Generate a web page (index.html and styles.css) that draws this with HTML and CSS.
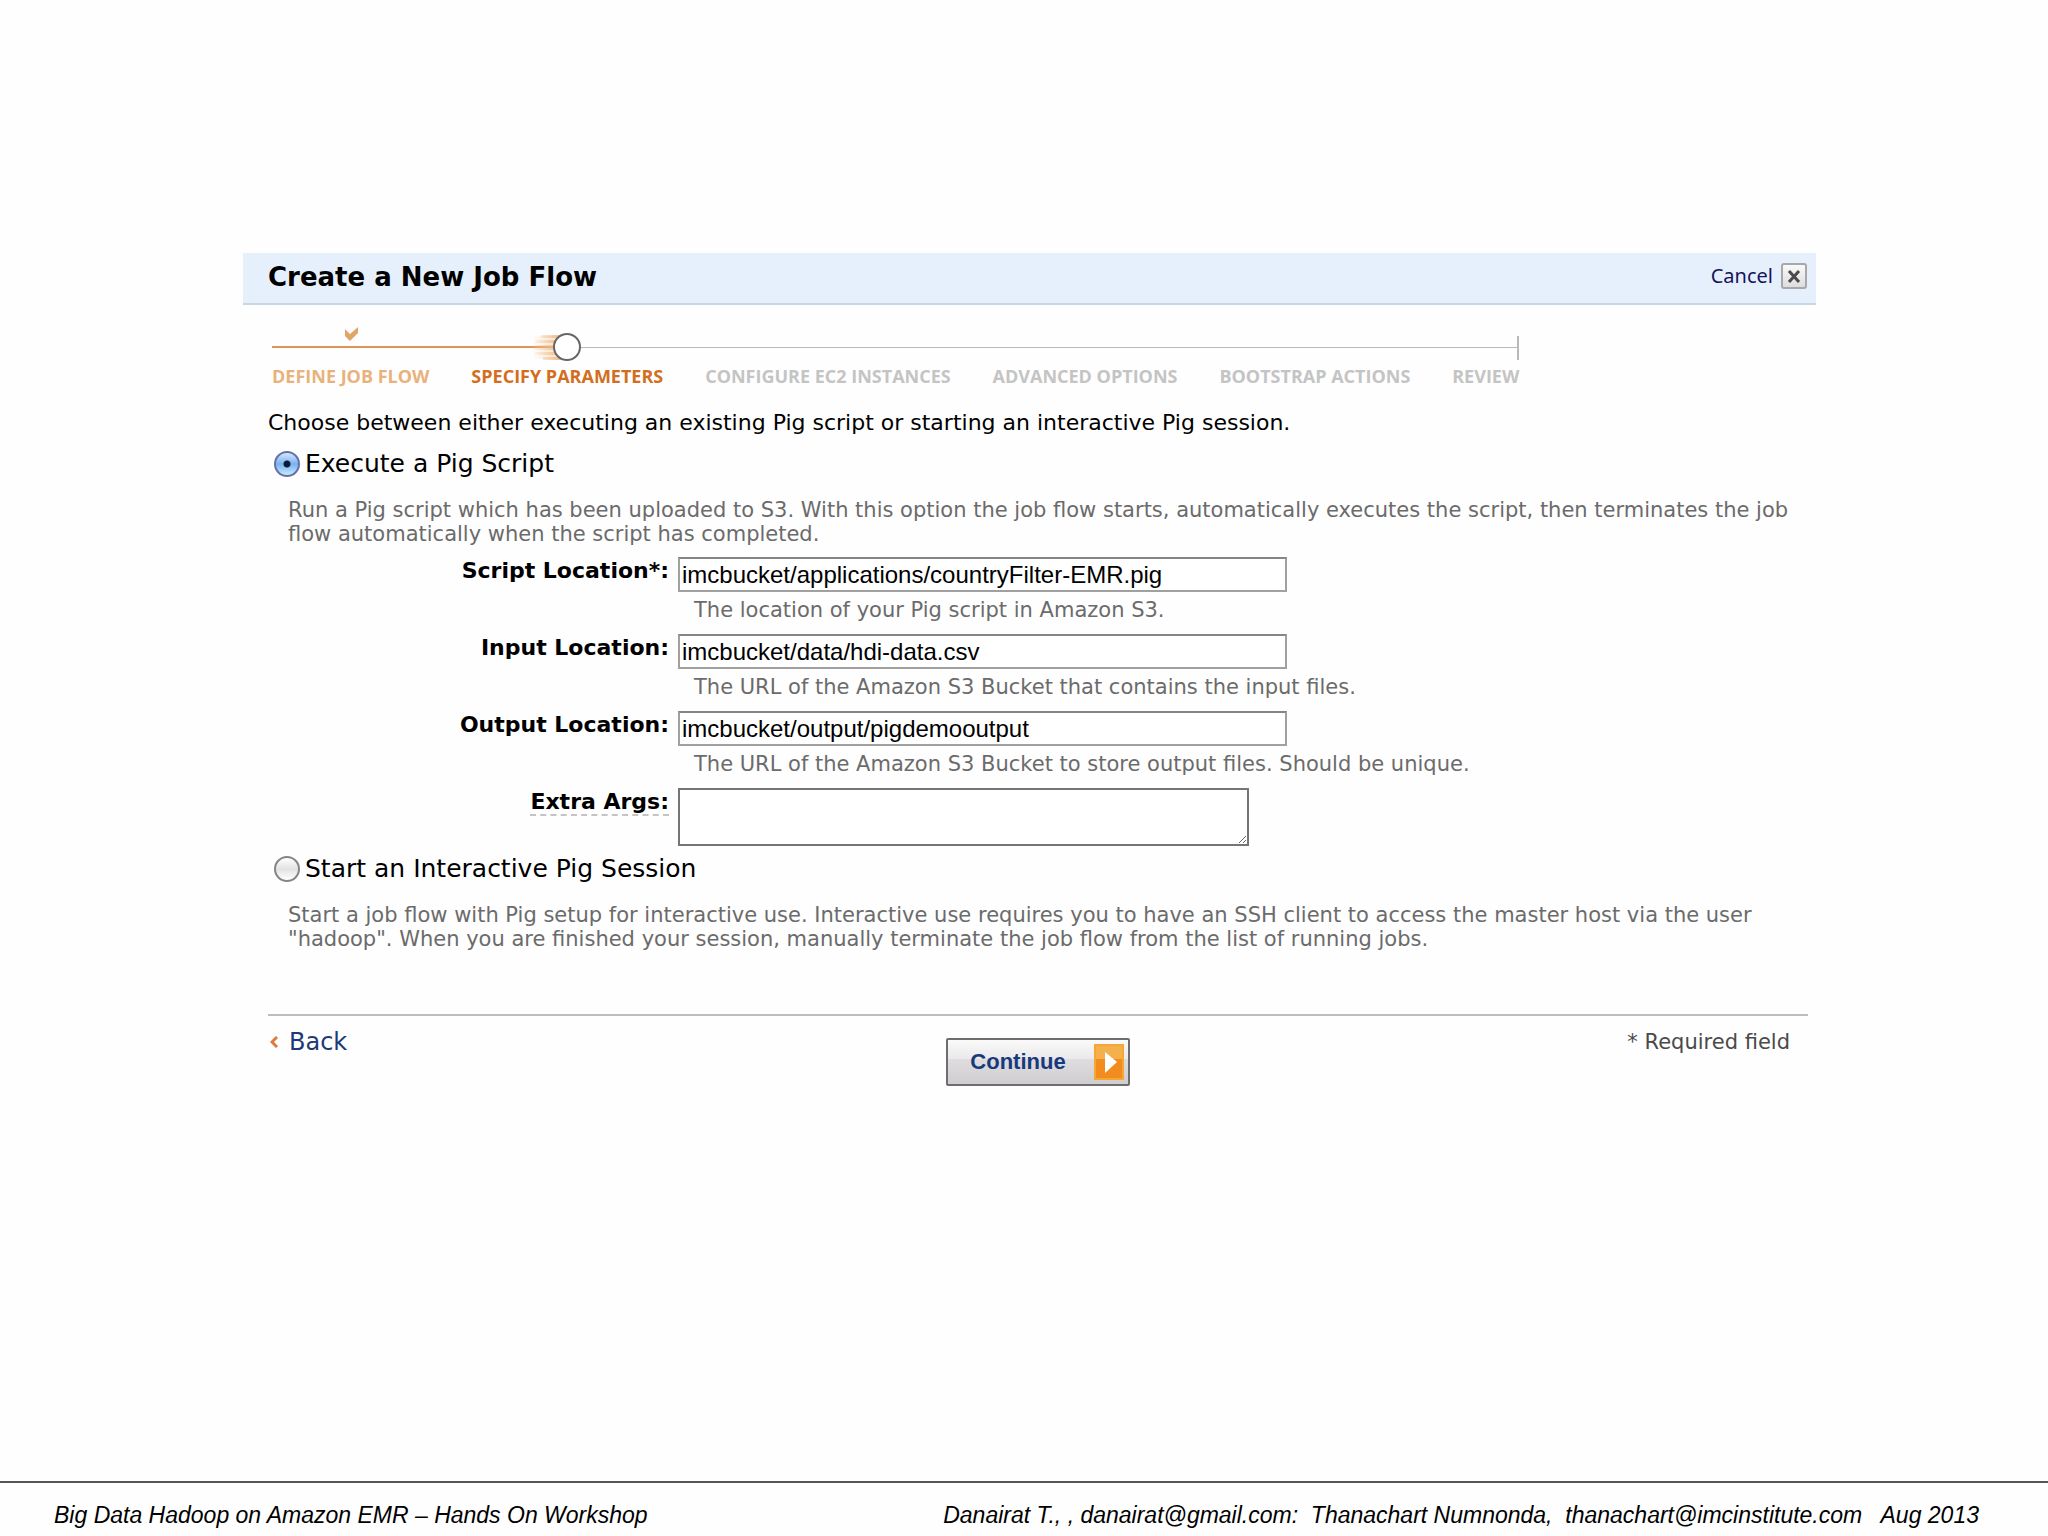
FILE: index.html
```
<!DOCTYPE html>
<html lang="en">
<head>
    <meta charset="UTF-8">
    <meta name="viewport" content="width=device-width, initial-scale=1.0">
    <title>Create a New Job Flow</title>
    <link rel="stylesheet" href="styles.css">
</head>
<body>
    <main class="dialog">
        <header class="dialog-header">
            <h1>Create a New Job Flow</h1>
            <button type="button" class="cancel">
                Cancel
                <svg class="close-icon" viewBox="0 0 26 26" aria-hidden="true">
                    <defs>
                        <linearGradient id="closeFill" x1="0" y1="0" x2="0" y2="1">
                            <stop offset="0" stop-color="#fafafa"/>
                            <stop offset="1" stop-color="#dcdcdc"/>
                        </linearGradient>
                    </defs>
                    <rect x="1" y="1" width="24" height="24" rx="2" fill="url(#closeFill)" stroke="#a8a8a8" stroke-width="2"/>
                    <path d="M8 8l10 11M18 8L8 19" stroke="#4a4a4a" stroke-width="3"/>
                </svg>
            </button>
        </header>

        <form class="dialog-body">
            <ol class="steps">
                <li class="step done">
                    <svg class="mark" viewBox="0 0 60 40" aria-hidden="true">
                        <path d="M24 2l5 5 8-7v6l-8 8-5-5z" fill="#e2a468"/>
                    </svg>
                    Define Job Flow
                </li>
                <li class="step current">
                    <svg class="mark" viewBox="0 0 60 40" aria-hidden="true">
                        <defs>
                            <linearGradient id="trail" gradientUnits="userSpaceOnUse" x1="-6" y1="0" x2="26" y2="0">
                                <stop offset="0" stop-color="#f3c493" stop-opacity="0"/>
                                <stop offset="1" stop-color="#eeb681"/>
                            </linearGradient>
                        </defs>
                        <path d="M4 8h22v3H4zM-2 13h26v3H-2zM-6 18h28v5H-6zM-2 25h26v3H-2zM6 30h22v3H6z" fill="url(#trail)"/>
                        <path d="M-4 9h30v23H-4z" fill="url(#trail)" opacity=".5"/>
                        <circle cx="30" cy="20" r="13" fill="#fff" stroke="#666" stroke-width="2"/>
                    </svg>
                    Specify Parameters
                </li>
                <li class="step">Configure EC2 Instances</li>
                <li class="step">Advanced Options</li>
                <li class="step">Bootstrap Actions</li>
                <li class="step">Review</li>
            </ol>

            <p class="intro">Choose between either executing an existing Pig script or starting an interactive Pig session.</p>

            <label class="choice">
                <input type="radio" name="mode" checked>
                Execute a Pig Script
            </label>
            <p class="description">Run a Pig script which has been uploaded to S3. With this option the job flow starts, automatically executes the script, then terminates the job flow automatically when the script has completed.</p>

            <div class="fields">
                <label for="script">Script Location*:</label>
                <div class="field">
                    <input type="text" id="script" value="imcbucket/applications/countryFilter-EMR.pig">
                    <p class="hint">The location of your Pig script in Amazon S3.</p>
                </div>
                <label for="input">Input Location:</label>
                <div class="field">
                    <input type="text" id="input" value="imcbucket/data/hdi-data.csv">
                    <p class="hint">The URL of the Amazon S3 Bucket that contains the input files.</p>
                </div>
                <label for="output">Output Location:</label>
                <div class="field">
                    <input type="text" id="output" value="imcbucket/output/pigdemooutput">
                    <p class="hint">The URL of the Amazon S3 Bucket to store output files. Should be unique.</p>
                </div>
                <label for="args"><span class="help">Extra Args:</span></label>
                <div class="field">
                    <textarea id="args"></textarea>
                </div>
            </div>

            <label class="choice">
                <input type="radio" name="mode">
                Start an Interactive Pig Session
            </label>
            <p class="description">Start a job flow with Pig setup for interactive use. Interactive use requires you to have an SSH client to access the master host via the user "hadoop". When you are finished your session, manually terminate the job flow from the list of running jobs.</p>

            <div class="actions">
                <a href="#" class="back">
                    <svg class="back-icon" viewBox="0 0 8 12" aria-hidden="true">
                        <path d="M7 1L2 6l5 5" fill="none" stroke="#e07a3c" stroke-width="3"/>
                    </svg>
                    Back
                </a>
                <button type="button" class="continue">
                    Continue
                    <svg class="arrow-icon" viewBox="0 0 30 36" aria-hidden="true">
                        <path d="M0 0h30v36H0z" fill="#f28c1e"/>
                        <path d="M0 0h30v15H0z" fill="#f5b04e"/>
                        <path d="M1 1h28v34H1z" fill="none" stroke="#f5a733" stroke-width="2"/>
                        <path d="M11 8l12 10-12 11z" fill="#fff"/>
                    </svg>
                </button>
                <span class="required">* Required field</span>
            </div>
        </form>
    </main>

    <footer class="slide-footer">
        <span>Big Data Hadoop on Amazon EMR – Hands On Workshop</span>
        <span class="authors">Danairat T., , danairat@gmail.com:  Thanachart Numnonda,  thanachart@imcinstitute.com   Aug 2013</span>
    </footer>
</body>
</html>
```
FILE: styles.css
```
* {
    box-sizing: border-box;
}
body {
    display: flex;
    flex-direction: column;
    min-height: 100vh;
    margin: 0;
    background: #fefefe;
    color: #000;
    font-family: Verdana, "DejaVu Sans", sans-serif;
}
h1, p, ol {
    margin: 0;
    padding: 0;
}
button {
    font: inherit;
    cursor: pointer;
}

.dialog {
    flex: 1;
    margin: 253px 232px 0 243px;
}
.dialog-header {
    display: flex;
    justify-content: space-between;
    align-items: center;
    height: 52px;
    padding: 0 9px 4px 25px;
    background: #e6f0fd;
    border-bottom: 2px solid #c8d8e2;
}
h1 {
    padding-top: 2px;
    font-size: 26px;
    line-height: 32px;
}
.cancel {
    display: flex;
    align-items: center;
    gap: 8px;
    padding: 0;
    border: 0;
    background: none;
    color: #14145a;
    font-family: "Noto Sans", sans-serif;
    font-size: 20px;
    line-height: 26px;
}
.close-icon {
    width: 26px;
    height: 26px;
}
.dialog-body {
    padding: 22px 8px 0 25px;
}

/* progress bar */
.steps {
    position: relative;
    display: flex;
    justify-content: space-between;
    width: 81%;
    margin-left: 4px;
    list-style: none;
    background:
        linear-gradient(#e0935a, #e0935a) no-repeat 0 19px / 23% 2px,
        linear-gradient(#b9b9b9, #b9b9b9) no-repeat 0 20px / 100% 1px;
}
.steps::after {
    content: "";
    position: absolute;
    top: 9px;
    right: 0;
    width: 2px;
    height: 24px;
    background: #b9b9b9;
}
.step {
    display: flex;
    flex-direction: column;
    align-items: center;
    justify-content: flex-end;
    color: #c4c4c4;
    font-family: "Open Sans", sans-serif;
    font-size: 18px;
    font-weight: 700;
    line-height: 18px;
    text-transform: uppercase;
}
.step.done {
    color: #e8b27c;
}
.step.current {
    color: #d26e20;
}
.mark {
    width: 60px;
    height: 40px;
    overflow: visible;
}

.intro {
    margin-top: 24px;
    font-size: 22px;
    line-height: 28px;
}
.choice {
    display: flex;
    align-items: center;
    gap: 5px;
    margin-top: 13px;
    padding-left: 6px;
    font-size: 25px;
    line-height: 28px;
}
.choice input {
    appearance: none;
    width: 26px;
    height: 26px;
    margin: 0;
    border: 2px solid #858585;
    border-radius: 50%;
    background: linear-gradient(#fff, #e2e2e2 50%, #fff);
}
.choice input:checked {
    border-color: #6670a8;
    background:
        radial-gradient(circle, #0a1a38 3px, transparent 4px),
        linear-gradient(#d4e6fc, #79b2ef 50%, #c5eaff);
}
.description {
    margin-top: 20px;
    padding: 0 8px 0 20px;
    color: #6b6b6b;
    font-size: 21px;
    line-height: 24px;
}

/* form grid */
.fields {
    display: grid;
    grid-template-columns: 401px 1fr;
    column-gap: 9px;
    margin-top: 11px;
}
.fields label {
    font-size: 22px;
    font-weight: 700;
    line-height: 28px;
    text-align: right;
}
.field {
    min-height: 77px;
}
.field input {
    display: block;
    width: 609px;
    height: 35px;
    padding: 0 2px;
    border: 2px solid #a0a0a0;
    border-top-color: #858585;
    background: #fff;
    font-family: "Liberation Sans", Arial, sans-serif;
    font-size: 24px;
}
.field textarea {
    display: block;
    width: 571px;
    height: 58px;
    border: 2px solid #757575;
    background: #fff;
    resize: both;
}
.hint {
    margin-top: 6px;
    padding-left: 16px;
    color: #6b6b6b;
    font-size: 21px;
    line-height: 24px;
}
.help {
    border-bottom: 2px dashed #c4c4c4;
}
.fields + .choice {
    margin-top: -10px;
}

.actions {
    display: grid;
    grid-template-columns: 1fr auto 1fr;
    margin-top: 63px;
    padding-top: 12px;
    border-top: 2px solid #bdbdbd;
}
.back {
    display: flex;
    align-items: center;
    align-self: start;
    gap: 11px;
    padding-left: 2px;
    color: #1c3a78;
    font-size: 24px;
    line-height: 28px;
    text-decoration: none;
}
.back-icon {
    width: 8px;
    height: 12px;
}
.continue {
    display: flex;
    align-items: center;
    gap: 28px;
    height: 48px;
    margin-top: 10px;
    padding: 0 4px 0 22px;
    border: 2px solid #6e6e6e;
    border-radius: 2px;
    background: linear-gradient(#fafafa, #ebe9eb 42%, #dfdde0 43%, #cfcdd0);
    color: #163a7c;
    font-family: "Liberation Sans", Arial, sans-serif;
    font-size: 22px;
    font-weight: 700;
}
.arrow-icon {
    width: 30px;
    height: 36px;
}
.required {
    justify-self: end;
    padding-right: 18px;
    color: #4a4a4a;
    font-size: 21px;
    line-height: 28px;
}

.slide-footer {
    display: flex;
    justify-content: space-between;
    padding: 18px 69px 7px 54px;
    border-top: 2px solid #555;
    font-family: "Liberation Sans", Arial, sans-serif;
    font-size: 23px;
    font-style: italic;
    line-height: 28px;
}
.authors {
    white-space: pre;
}
```
